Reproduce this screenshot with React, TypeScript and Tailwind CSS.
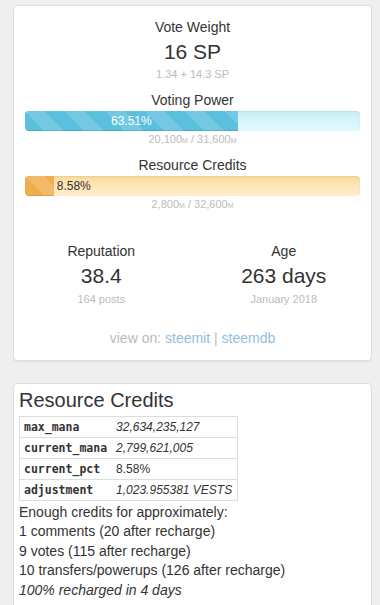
const stripes =
  "bg-[linear-gradient(45deg,rgba(255,255,255,.15)_25%,transparent_25%,transparent_50%,rgba(255,255,255,.15)_50%,rgba(255,255,255,.15)_75%,transparent_75%,transparent)] bg-[length:40px_40px]";

const rcRows = [
  { key: "max_mana", value: "32,634,235,127", italic: true },
  { key: "current_mana", value: "2,799,621,005", italic: true },
  { key: "current_pct", value: "8.58%", italic: false },
  { key: "adjustment", value: "1,023.955381 VESTS", italic: true },
];

const estimates = [
  "Enough credits for approximately:",
  "1 comments (20 after recharge)",
  "9 votes (115 after recharge)",
  "10 transfers/powerups (126 after recharge)",
];

function Amount({ cur, max }: { cur: string; max: string }) {
  return (
    <div className="mt-[1px] h-[14px] text-[11px] leading-[14px] text-[#bbb]">
      {cur}
      <span className="text-[7px] leading-none">M</span> / {max}
      <span className="text-[7px] leading-none">M</span>
    </div>
  );
}

function Stat({ label, value, sub }: { label: string; value: string; sub: string }) {
  return (
    <div className="text-center">
      <div className="text-[14px] leading-[20px]">{label}</div>
      <div className="text-[21px] leading-[30px]">{value}</div>
      <div className="mt-[1px] text-[11px] leading-[14px] text-[#bbb]">{sub}</div>
    </div>
  );
}

export default function App() {
  const vp = 63.51;
  const rc = 8.58;

  return (
    <div className="min-h-screen bg-[#efefef] pl-[13px] pt-[5px] font-['Liberation_Sans',Arial,sans-serif] text-[#333]">
      {/* account summary */}
      <div className="w-[359px] rounded-[4px] border border-[#dddddd] bg-white px-[11px] pb-[12px] pt-[11px] text-center shadow-[0_1px_1px_rgba(0,0,0,0.05)]">
        <div className="text-[14px] leading-[20px]">Vote Weight</div>
        <div className="text-[21px] leading-[30px]">16 SP</div>
        <div className="text-[11px] leading-[14px] text-[#bbb]">1.34 + 14.3 SP</div>

        <div className="mt-[9px] text-[14px] leading-[20px]">Voting Power</div>
        <div className="mt-[1px] flex h-[20px] overflow-hidden rounded-[4px] bg-gradient-to-b from-[#caeff8] to-[#dffbfe] shadow-[inset_0_1px_2px_rgba(0,0,0,0.08)]">
          <div
            className={`h-full bg-[#5bc0de] text-center text-[12px] leading-[20px] text-white shadow-[inset_0_-1px_0_rgba(0,0,0,0.12)] ${stripes}`}
            style={{ width: `${vp}%` }}
          >
            {vp}%
          </div>
        </div>
        <Amount cur="20,100" max="31,600" />

        <div className="mt-[9px] text-[14px] leading-[20px]">Resource Credits</div>
        <div className="mt-[1px] flex h-[20px] overflow-hidden rounded-[4px] bg-gradient-to-b from-[#fcdc9c] to-[#ffefcc] shadow-[inset_0_1px_2px_rgba(0,0,0,0.08)]">
          <div
            className={`h-full bg-[#f0ad4e] shadow-[inset_0_-1px_0_rgba(0,0,0,0.1)] ${stripes}`}
            style={{ width: `${rc}%` }}
          />
          <span className="ml-[3px] text-[12px] leading-[20px] text-[#333]">{rc}%</span>
        </div>
        <Amount cur="2,800" max="32,600" />

        <div className="-mx-[15px] mt-[30px] grid grid-cols-2">
          <Stat label="Reputation" value="38.4" sub="164 posts" />
          <Stat label="Age" value="263 days" sub="January 2018" />
        </div>

        <div className="mt-[22px] text-[14px] leading-[20px] text-[#bbb]">
          view on: <span className="text-[#94bde3]">steemit</span> |{" "}
          <span className="text-[#94bde3]">steemdb</span>
        </div>
      </div>

      {/* resource credits detail */}
      <div className="mt-[22px] w-[359px] rounded-[4px] border border-[#dddddd] bg-white px-[5px] pb-[12px] pt-[4px] shadow-[0_1px_1px_rgba(0,0,0,0.05)]">
        <h3 className="text-[20px] font-normal leading-[24px]">Resource Credits</h3>
        <table className="mt-[4px] border-collapse border border-[#dddddd]">
          <tbody>
            {rcRows.map((row) => (
              <tr key={row.key} className="border-t border-[#dddddd]">
                <td className="h-[21px] py-0 pl-[4px] pr-[4px] font-['DejaVu_Sans_Mono',monospace] text-[11.5px] font-semibold leading-[14px]">
                  {row.key}
                </td>
                <td
                  className={`h-[21px] py-0 pl-[5px] pr-[5px] text-[12px] leading-[14px] ${row.italic ? "italic" : ""}`}
                >
                  {row.value}
                </td>
              </tr>
            ))}
          </tbody>
        </table>
        <div className="mt-[2px] text-[14px] leading-[19.4px]">
          {estimates.map((line) => (
            <div key={line}>{line}</div>
          ))}
          <div className="italic">100% recharged in 4 days</div>
        </div>
      </div>
    </div>
  );
}
